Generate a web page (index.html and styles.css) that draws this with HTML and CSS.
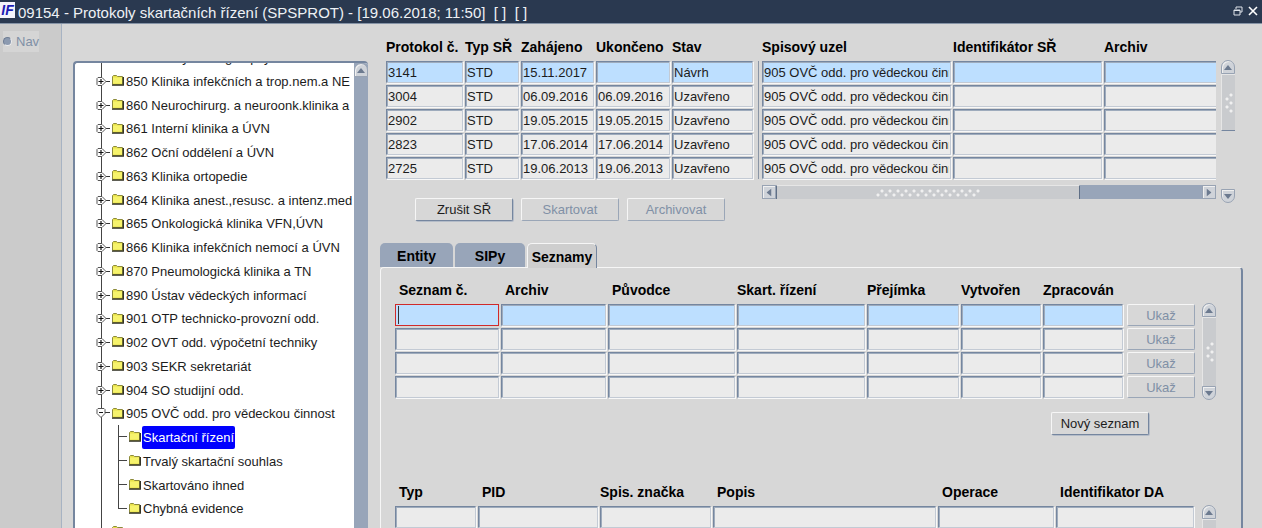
FILE: index.html
```
<!DOCTYPE html>
<html lang="cs">
<head>
    <meta charset="UTF-8">
    <meta name="viewport" content="width=device-width, initial-scale=1.0">
    <title>Protokoly skartačních řízení</title>
    <link rel="stylesheet" href="styles.css">
</head>
<body>
    <svg class="symbols" aria-hidden="true">
        <symbol id="folder" viewBox="0 0 13 12">
            <path d="M1.500 2.500l1-1h3l1 1h5v8h-10z" fill="#e6e04a" stroke="#8c8a3c"/>
            <path d="M2 3.500h9v6H2z" fill="#f6f36c"/>
            <path d="M1 11.200h11.300V3" fill="none" stroke="#2b2b1c" stroke-width="1.300"/>
        </symbol>
        <symbol id="closed" viewBox="0 0 14 11">
            <path d="M9 5.500h5" stroke="#333"/>
            <path d="M2 1.500h4l4 4-4 4H2l-1-1v-6z" fill="#fff" stroke="#555"/>
            <path d="M2.500 5.500h5M5 3v5" stroke="#111" stroke-width="1.200"/>
        </symbol>
        <symbol id="opened" viewBox="0 0 14 11">
            <path d="M9 4.500h5" stroke="#333"/>
            <path d="M1 1.500l1-1h6l1 1v4l-4 4-4-4z" fill="#fff" stroke="#555"/>
            <path d="M3 4.500h4" stroke="#111"/>
        </symbol>
        <symbol id="arrow" viewBox="0 0 8 5">
            <path d="M0 5l4-5 4 5z" fill="#6c7a8f"/>
        </symbol>
    </svg>

    <header class="titlebar">
        <span class="logo">IF</span>
        <h1>09154 - Protokoly skartačních řízení (SPSPROT) - [19.06.2018; 11:50]&nbsp; [ ]&nbsp; [ ]</h1>
        <button class="window-btn" aria-label="Obnovit">
            <svg width="10" height="10" viewBox="0 0 10 10" fill="none" stroke="#dfe4ea"><path d="M3 3V1h6v5H7"/><path d="M1 4h6v5H1z"/><path d="M1 4.500h6"/></svg>
        </button>
        <button class="window-btn" aria-label="Zavřít">
            <svg width="10" height="10" viewBox="0 0 10 10" stroke="#fff" stroke-width="1.600"><path d="M1 1l8 8M9 1L1 9"/></svg>
        </button>
    </header>

    <div class="workspace">
        <aside class="sidebar">
            <label class="nav-option"><input type="radio" name="nav" disabled>Nav</label>
        </aside>

        <nav class="tree">
            <ul class="tree-list">
                <li><svg class="node"><use href="#closed"/></svg><svg class="folder"><use href="#folder"/></svg><span>840 Kliniky chirurg. a psych.</span></li>
                <li><svg class="node"><use href="#closed"/></svg><svg class="folder"><use href="#folder"/></svg><span>850 Klinika infekčních a trop.nem.a NE</span></li>
                <li><svg class="node"><use href="#closed"/></svg><svg class="folder"><use href="#folder"/></svg><span>860 Neurochirurg. a neuroonk.klinika a</span></li>
                <li><svg class="node"><use href="#closed"/></svg><svg class="folder"><use href="#folder"/></svg><span>861 Interní klinika a ÚVN</span></li>
                <li><svg class="node"><use href="#closed"/></svg><svg class="folder"><use href="#folder"/></svg><span>862 Oční oddělení a ÚVN</span></li>
                <li><svg class="node"><use href="#closed"/></svg><svg class="folder"><use href="#folder"/></svg><span>863 Klinika ortopedie</span></li>
                <li><svg class="node"><use href="#closed"/></svg><svg class="folder"><use href="#folder"/></svg><span>864 Klinika anest.,resusc. a intenz.med</span></li>
                <li><svg class="node"><use href="#closed"/></svg><svg class="folder"><use href="#folder"/></svg><span>865 Onkologická klinika VFN,ÚVN</span></li>
                <li><svg class="node"><use href="#closed"/></svg><svg class="folder"><use href="#folder"/></svg><span>866 Klinika infekčních nemocí a ÚVN</span></li>
                <li><svg class="node"><use href="#closed"/></svg><svg class="folder"><use href="#folder"/></svg><span>870 Pneumologická klinika a TN</span></li>
                <li><svg class="node"><use href="#closed"/></svg><svg class="folder"><use href="#folder"/></svg><span>890 Ústav vědeckých informací</span></li>
                <li><svg class="node"><use href="#closed"/></svg><svg class="folder"><use href="#folder"/></svg><span>901 OTP technicko-provozní odd.</span></li>
                <li><svg class="node"><use href="#closed"/></svg><svg class="folder"><use href="#folder"/></svg><span>902 OVT odd. výpočetní techniky</span></li>
                <li><svg class="node"><use href="#closed"/></svg><svg class="folder"><use href="#folder"/></svg><span>903 SEKR sekretariát</span></li>
                <li><svg class="node"><use href="#closed"/></svg><svg class="folder"><use href="#folder"/></svg><span>904 SO studijní odd.</span></li>
                <li><svg class="node"><use href="#opened"/></svg><svg class="folder"><use href="#folder"/></svg><span>905 OVČ odd. pro vědeckou činnost</span></li>
                <li class="child"><i class="branch"></i><svg class="folder"><use href="#folder"/></svg><span class="selected">Skartační řízení</span></li>
                <li class="child"><i class="branch"></i><svg class="folder"><use href="#folder"/></svg><span>Trvalý skartační souhlas</span></li>
                <li class="child"><i class="branch"></i><svg class="folder"><use href="#folder"/></svg><span>Skartováno ihned</span></li>
                <li class="child"><i class="branch last"></i><svg class="folder"><use href="#folder"/></svg><span>Chybná evidence</span></li>
                <li><svg class="node"><use href="#closed"/></svg><svg class="folder"><use href="#folder"/></svg><span>906 PAM personální a mzdové odd.</span></li>
            </ul>
            <div class="scrollbar tree-scroll">
                <button class="arrow-btn up" aria-label="Nahoru"><svg><use href="#arrow"/></svg></button>
            </div>
        </nav>

        <main class="content">
            <section class="protocols">
                <div class="protocols-main">
                    <table class="grid protocol-grid">
                        <colgroup><col class="w-79"><col class="w-56"><col class="w-75"><col class="w-76"><col class="w-83"></colgroup>
                        <thead>
                            <tr><th>Protokol č.</th><th>Typ SŘ</th><th>Zahájeno</th><th>Ukončeno</th><th>Stav</th></tr>
                        </thead>
                        <tbody>
                            <tr class="current">
                                <td><input aria-label="Protokol č." value="3141"></td>
                                <td><input aria-label="Typ SŘ" value="STD"></td>
                                <td><input aria-label="Zahájeno" value="15.11.2017"></td>
                                <td><input aria-label="Ukončeno" value=""></td>
                                <td><input aria-label="Stav" value="Návrh"></td>
                            </tr>
                            <tr>
                                <td><input aria-label="Protokol č." value="3004"></td>
                                <td><input aria-label="Typ SŘ" value="STD"></td>
                                <td><input aria-label="Zahájeno" value="06.09.2016"></td>
                                <td><input aria-label="Ukončeno" value="06.09.2016"></td>
                                <td><input aria-label="Stav" value="Uzavřeno"></td>
                            </tr>
                            <tr>
                                <td><input aria-label="Protokol č." value="2902"></td>
                                <td><input aria-label="Typ SŘ" value="STD"></td>
                                <td><input aria-label="Zahájeno" value="19.05.2015"></td>
                                <td><input aria-label="Ukončeno" value="19.05.2015"></td>
                                <td><input aria-label="Stav" value="Uzavřeno"></td>
                            </tr>
                            <tr>
                                <td><input aria-label="Protokol č." value="2823"></td>
                                <td><input aria-label="Typ SŘ" value="STD"></td>
                                <td><input aria-label="Zahájeno" value="17.06.2014"></td>
                                <td><input aria-label="Ukončeno" value="17.06.2014"></td>
                                <td><input aria-label="Stav" value="Uzavřeno"></td>
                            </tr>
                            <tr>
                                <td><input aria-label="Protokol č." value="2725"></td>
                                <td><input aria-label="Typ SŘ" value="STD"></td>
                                <td><input aria-label="Zahájeno" value="19.06.2013"></td>
                                <td><input aria-label="Ukončeno" value="19.06.2013"></td>
                                <td><input aria-label="Stav" value="Uzavřeno"></td>
                            </tr>
                        </tbody>
                    </table>
                    <div class="actions">
                        <button class="btn">Zrušit SŘ</button>
                        <button class="btn" disabled>Skartovat</button>
                        <button class="btn" disabled>Archivovat</button>
                    </div>
                </div>

                <div class="divider"></div>

                <div class="protocols-detail">
                    <div class="clip">
                        <table class="grid">
                            <colgroup><col class="w-191"><col class="w-151"><col></colgroup>
                            <thead>
                                <tr><th>Spisový uzel</th><th>Identifikátor SŘ</th><th>Archiv</th></tr>
                            </thead>
                            <tbody>
                                <tr class="current">
                                    <td><input aria-label="Spisový uzel" value="905 OVČ odd. pro vědeckou činnost"></td>
                                    <td><input aria-label="Identifikátor SŘ"></td>
                                    <td><input aria-label="Archiv"></td>
                                </tr>
                                <tr>
                                    <td><input aria-label="Spisový uzel" value="905 OVČ odd. pro vědeckou činnost"></td>
                                    <td><input aria-label="Identifikátor SŘ"></td>
                                    <td><input aria-label="Archiv"></td>
                                </tr>
                                <tr>
                                    <td><input aria-label="Spisový uzel" value="905 OVČ odd. pro vědeckou činnost"></td>
                                    <td><input aria-label="Identifikátor SŘ"></td>
                                    <td><input aria-label="Archiv"></td>
                                </tr>
                                <tr>
                                    <td><input aria-label="Spisový uzel" value="905 OVČ odd. pro vědeckou činnost"></td>
                                    <td><input aria-label="Identifikátor SŘ"></td>
                                    <td><input aria-label="Archiv"></td>
                                </tr>
                                <tr>
                                    <td><input aria-label="Spisový uzel" value="905 OVČ odd. pro vědeckou činnost"></td>
                                    <td><input aria-label="Identifikátor SŘ"></td>
                                    <td><input aria-label="Archiv"></td>
                                </tr>
                            </tbody>
                        </table>
                    </div>
                    <div class="scrollbar horizontal">
                        <button class="arrow-btn left" aria-label="Vlevo"><svg><use href="#arrow"/></svg></button>
                        <div class="thumb"><span class="grip"></span></div>
                        <button class="arrow-btn right" aria-label="Vpravo"><svg><use href="#arrow"/></svg></button>
                    </div>
                </div>

                <div class="scrollbar protocol-scroll">
                    <button class="arrow-btn up" aria-label="Nahoru"><svg><use href="#arrow"/></svg></button>
                    <div class="thumb"><span class="grip"></span></div>
                    <button class="arrow-btn down" aria-label="Dolů"><svg><use href="#arrow"/></svg></button>
                </div>
            </section>

            <div class="tabs" role="tablist">
                <button class="tab tab-wide" role="tab">Entity</button>
                <button class="tab" role="tab">SIPy</button>
                <button class="tab active" role="tab" aria-selected="true">Seznamy</button>
            </div>

            <section class="panel">
                <div class="list-row">
                    <table class="grid lists-grid">
                        <colgroup><col class="w-106"><col class="w-107"><col><col class="w-130"><col class="w-94"><col class="w-82"><col class="w-82"><col class="w-71"></colgroup>
                        <thead>
                            <tr>
                                <th class="inset">Seznam č.</th><th class="inset">Archiv</th><th class="inset">Původce</th><th>Skart. řízení</th>
                                <th>Přejímka</th><th>Vytvořen</th><th>Zpracován</th><th></th>
                            </tr>
                        </thead>
                        <tbody>
                            <tr class="current">
                                <td><input class="focused" aria-label="Seznam č."></td>
                                <td><input aria-label="Archiv"></td>
                                <td><input aria-label="Původce"></td>
                                <td><input aria-label="Skart. řízení"></td>
                                <td><input aria-label="Přejímka"></td>
                                <td><input aria-label="Vytvořen"></td>
                                <td><input aria-label="Zpracován"></td>
                                <td class="cell-btn"><button class="btn" disabled>Ukaž</button></td>
                            </tr>
                            <tr>
                                <td><input aria-label="Seznam č."></td>
                                <td><input aria-label="Archiv"></td>
                                <td><input aria-label="Původce"></td>
                                <td><input aria-label="Skart. řízení"></td>
                                <td><input aria-label="Přejímka"></td>
                                <td><input aria-label="Vytvořen"></td>
                                <td><input aria-label="Zpracován"></td>
                                <td class="cell-btn"><button class="btn" disabled>Ukaž</button></td>
                            </tr>
                            <tr>
                                <td><input aria-label="Seznam č."></td>
                                <td><input aria-label="Archiv"></td>
                                <td><input aria-label="Původce"></td>
                                <td><input aria-label="Skart. řízení"></td>
                                <td><input aria-label="Přejímka"></td>
                                <td><input aria-label="Vytvořen"></td>
                                <td><input aria-label="Zpracován"></td>
                                <td class="cell-btn"><button class="btn" disabled>Ukaž</button></td>
                            </tr>
                            <tr>
                                <td><input aria-label="Seznam č."></td>
                                <td><input aria-label="Archiv"></td>
                                <td><input aria-label="Původce"></td>
                                <td><input aria-label="Skart. řízení"></td>
                                <td><input aria-label="Přejímka"></td>
                                <td><input aria-label="Vytvořen"></td>
                                <td><input aria-label="Zpracován"></td>
                                <td class="cell-btn"><button class="btn" disabled>Ukaž</button></td>
                            </tr>
                        </tbody>
                    </table>
                    <div class="scrollbar">
                        <button class="arrow-btn up" aria-label="Nahoru"><svg><use href="#arrow"/></svg></button>
                        <div class="thumb"><span class="grip"></span></div>
                        <button class="arrow-btn down" aria-label="Dolů"><svg><use href="#arrow"/></svg></button>
                    </div>
                </div>

                <div class="new-list">
                    <button class="btn">Nový seznam</button>
                </div>

                <div class="list-row">
                    <table class="grid">
                        <colgroup><col class="w-83"><col class="w-122"><col class="w-113"><col><col class="w-118"><col class="w-140"></colgroup>
                        <thead>
                            <tr>
                                <th class="inset">Typ</th><th class="inset">PID</th><th>Spis. značka</th>
                                <th class="inset">Popis</th><th class="inset">Operace</th><th class="inset">Identifikator DA</th>
                            </tr>
                        </thead>
                        <tbody>
                            <tr>
                                <td><input aria-label="Typ"></td>
                                <td><input aria-label="PID"></td>
                                <td><input aria-label="Spis. značka"></td>
                                <td><input aria-label="Popis"></td>
                                <td><input aria-label="Operace"></td>
                                <td><input aria-label="Identifikator DA"></td>
                            </tr>
                            <tr>
                                <td><input aria-label="Typ"></td>
                                <td><input aria-label="PID"></td>
                                <td><input aria-label="Spis. značka"></td>
                                <td><input aria-label="Popis"></td>
                                <td><input aria-label="Operace"></td>
                                <td><input aria-label="Identifikator DA"></td>
                            </tr>
                        </tbody>
                    </table>
                    <div class="scrollbar">
                        <button class="arrow-btn up" aria-label="Nahoru"><svg><use href="#arrow"/></svg></button>
                        <div class="thumb"></div>
                    </div>
                </div>
            </section>
        </main>
    </div>
</body>
</html>
```
FILE: styles.css
```
:root {
    --bg: #d7d7d7;
    --title-bg: #2a3950;
    --edge: #75869f;
    --track: #98a5b9;
    --field: #ebebeb;
    --field-current: #bddfff;
    --muted: #8090a6;
    --text: #1c1c1c;
}

* {
    margin: 0;
    padding: 0;
    box-sizing: border-box;
}

body {
    display: flex;
    flex-direction: column;
    height: 100vh;
    overflow: hidden;
    font-family: "Liberation Sans", Arial, sans-serif;
    font-size: 13px;
    color: var(--text);
    background: var(--bg);
}

button,
input {
    font: inherit;
    color: inherit;
}

.symbols {
    position: absolute;
    width: 0;
    height: 0;
}

/* Title bar */
.titlebar {
    display: flex;
    flex: none;
    align-items: center;
    height: 24px;
    padding-right: 2px;
    color: #eef1f5;
    background: var(--title-bg);
    border-bottom: 1px solid #8593a6;
}

.titlebar h1 {
    flex: 1;
    padding: 2px 0 0 3px;
    font-size: 15px;
    font-weight: normal;
    line-height: 20px;
    white-space: nowrap;
}

.logo {
    width: 15px;
    height: 16px;
    margin-bottom: 4px;
    font-size: 14px;
    font-weight: bold;
    font-style: italic;
    line-height: 16px;
    text-align: center;
    color: #1c1cb4;
    background: #f4f4fb;
}

.window-btn {
    width: 15px;
    height: 20px;
    background: none;
    border: none;
}

.workspace {
    display: flex;
    flex: 1;
    min-height: 0;
}

/* Sidebar */
.sidebar {
    flex: none;
    width: 62px;
    padding: 7px 0 0 3px;
    background: #cbcbcb;
    border-right: 1px solid #a7b3c3;
}

.nav-option {
    display: inline-flex;
    align-items: center;
    gap: 4px;
    height: 21px;
    color: var(--muted);
    background: #d5d5d5;
}

.nav-option input {
    appearance: none;
    width: 9px;
    height: 9px;
    background: #8c9ab0;
    border: 1px solid #6f7e94;
    border-right-color: #eee;
    border-bottom-color: #eee;
    border-radius: 50%;
}

/* Tree */
.tree {
    display: flex;
    flex: none;
    width: 295px;
    margin: 37px 0 0 11px;
    overflow: hidden;
    background: #fff;
    border: 2px solid var(--edge);
    border-right: none;
    border-bottom: none;
    border-radius: 4px 4px 0 0;
}

.tree-list {
    flex: 1;
    min-width: 0;
    margin-top: -18px;
    overflow: hidden;
    list-style: none;
    background: linear-gradient(#444, #444) 26px 0 / 1px 100% no-repeat;
}

.tree-list li {
    display: flex;
    align-items: center;
    height: 24px;
    padding-left: 21px;
    white-space: nowrap;
}

.tree-list li:nth-child(4n) {
    height: 23px;
}

.tree-list .child {
    padding-left: 43px;
}

.tree-list span {
    padding: 0 1px;
    line-height: 23px;
}

.tree-list .selected {
    color: #fff;
    background: #0000fe;
    border-radius: 2px;
}

.node {
    flex: none;
    width: 14px;
    height: 11px;
}

.folder {
    flex: none;
    width: 13px;
    height: 12px;
    margin: 0 1px 2px;
}

.branch {
    position: relative;
    align-self: stretch;
    width: 9px;
    border-left: 1px solid #444;
}

.branch::after {
    content: "";
    position: absolute;
    top: 11px;
    left: 0;
    width: 8px;
    border-top: 1px solid #444;
}

.branch.last {
    height: 12px;
    align-self: flex-start;
}

/* Scrollbars */
.scrollbar {
    display: flex;
    flex: none;
    flex-direction: column;
    width: 14px;
}

.tree-scroll {
    background: var(--track);
}

.arrow-btn {
    display: flex;
    flex: none;
    align-items: center;
    justify-content: center;
    width: 14px;
    height: 14px;
    background: #cfd3d9;
    border: 1px solid #98a3b3;
    box-shadow: inset 1px 1px 0 #f0f0f0;
}

.arrow-btn svg {
    width: 8px;
    height: 5px;
}

.arrow-btn.up {
    border-radius: 7px 7px 0 0;
}

.arrow-btn.down {
    border-radius: 0 0 7px 7px;
}

.arrow-btn.down svg {
    transform: rotate(180deg);
}

.arrow-btn.left svg {
    transform: rotate(-90deg);
}

.arrow-btn.right svg {
    transform: rotate(90deg);
}

.arrow-btn.right {
    margin-left: auto;
}

.thumb {
    display: flex;
    flex: 1;
    align-items: center;
    justify-content: center;
    background: #c9cbce;
    border: 1px solid #e6e6e6;
    border-width: 1px 0 0 1px;
}

.grip {
    width: 8px;
    height: 20px;
    background: radial-gradient(circle at 2px 6px, #f0f0f0 1px, transparent 2px) 0 0 / 8px 8px,
        radial-gradient(circle at 6px 2px, #f0f0f0 1px, transparent 2px) 0 0 / 8px 8px;
}

.horizontal {
    flex-direction: row;
    width: 100%;
    height: 14px;
    margin-top: 4px;
    background: var(--track);
}

.horizontal .thumb {
    flex: 0 0 67%;
    border-right: 1px solid #5f6f86;
    border-left: 1px solid #5f6f86;
}

.horizontal .grip {
    width: 104px;
    height: 8px;
}

/* Record grids */
.grid {
    width: 100%;
    table-layout: fixed;
    border-collapse: collapse;
}

.grid th {
    height: 28px;
    font-size: 14px;
    text-align: left;
    white-space: nowrap;
    color: #000;
}

.grid .inset {
    padding-left: 4px;
}

.grid td {
    height: 24px;
    padding: 0 2px 2px 0;
}

.grid input {
    display: block;
    width: 100%;
    height: 22px;
    padding: 0 1px;
    background: var(--field);
    border: 1px solid;
    border-color: var(--edge) #c3cad4 #c3cad4 var(--edge);
    box-shadow: 1px 1px 0 #f8f8f8, inset 1px 1px 0 #9eabbc;
}

.grid .current input {
    background: var(--field-current);
}

.grid .current .focused {
    background: linear-gradient(#333, #333) 2px 1px / 1px 18px no-repeat var(--field-current);
    border-color: #d02a2a;
    box-shadow: none;
}

.w-56 { width: 56px; }
.w-71 { width: 71px; }
.w-75 { width: 75px; }
.w-76 { width: 76px; }
.w-79 { width: 79px; }
.w-82 { width: 82px; }
.w-83 { width: 83px; }
.w-94 { width: 94px; }
.w-106 { width: 106px; }
.w-107 { width: 107px; }
.w-113 { width: 113px; }
.w-118 { width: 118px; }
.w-122 { width: 122px; }
.w-130 { width: 130px; }
.w-140 { width: 140px; }
.w-151 { width: 151px; }
.w-191 { width: 191px; }

.btn {
    width: 98px;
    height: 23px;
    background: var(--bg);
    border: 1px solid;
    border-color: #f6f6f6 #75869f #75869f #f6f6f6;
    border-radius: 2px;
    box-shadow: 1px 1px 0 #b4bcc8;
}

.btn:disabled {
    color: var(--muted);
    border-color: #f6f6f6 #9aa6b7 #9aa6b7 #f6f6f6;
    box-shadow: none;
}

/* Content */
.content {
    display: flex;
    flex: 1;
    flex-direction: column;
    min-width: 0;
    padding: 9px 19px 0 12px;
}

.protocols {
    display: flex;
    flex: none;
    padding: 0 8px 0 6px;
}

.protocols-main {
    flex: none;
    width: 369px;
}

.actions {
    display: flex;
    gap: 8px;
    margin: 17px 0 0 29px;
}

.divider {
    width: 1px;
    height: 118px;
    margin: 28px 3px 0;
    background: #8a95a5;
}

.protocols-detail {
    flex: 1;
    min-width: 0;
}

.clip {
    overflow: hidden;
}

.clip td:last-child {
    padding-right: 0;
}

.clip td:last-child input {
    border-right: none;
}

.protocol-scroll {
    margin: 27px 0 18px 5px;
}

.protocol-scroll .thumb {
    flex: 0 0 57px;
    border-bottom: 1px solid var(--edge);
}

.protocol-scroll .down {
    margin-top: auto;
}

/* Tabs */
.tabs {
    display: flex;
    flex: none;
    gap: 2px;
    margin-top: 22px;
}

.tab {
    width: 70px;
    height: 24px;
    padding-top: 2px;
    font-size: 14px;
    font-weight: bold;
    color: #000;
    background: var(--track);
    border: none;
    border-radius: 5px 5px 0 0;
}

.tab-wide {
    width: 73px;
}

.tab.active {
    z-index: 1;
    height: 25px;
    margin-bottom: -1px;
    background: #cecece;
    border: 1px solid #f6f6f6;
    border-right-color: var(--edge);
    border-bottom: none;
}

.panel {
    flex: 1;
    min-height: 0;
    padding: 8px 25px 0 14px;
    border: 1px solid #f6f6f6;
    border-right: 2px solid var(--edge);
    border-bottom: none;
    border-radius: 4px 4px 0 0;
}

.list-row {
    display: flex;
    gap: 6px;
}

.list-row .scrollbar {
    margin-top: 27px;
}

.cell-btn .btn {
    display: block;
    width: 68px;
    height: 22px;
    margin-left: 2px;
}

.new-list {
    display: flex;
    justify-content: flex-end;
    margin: 12px 67px 43px 0;
}
```
